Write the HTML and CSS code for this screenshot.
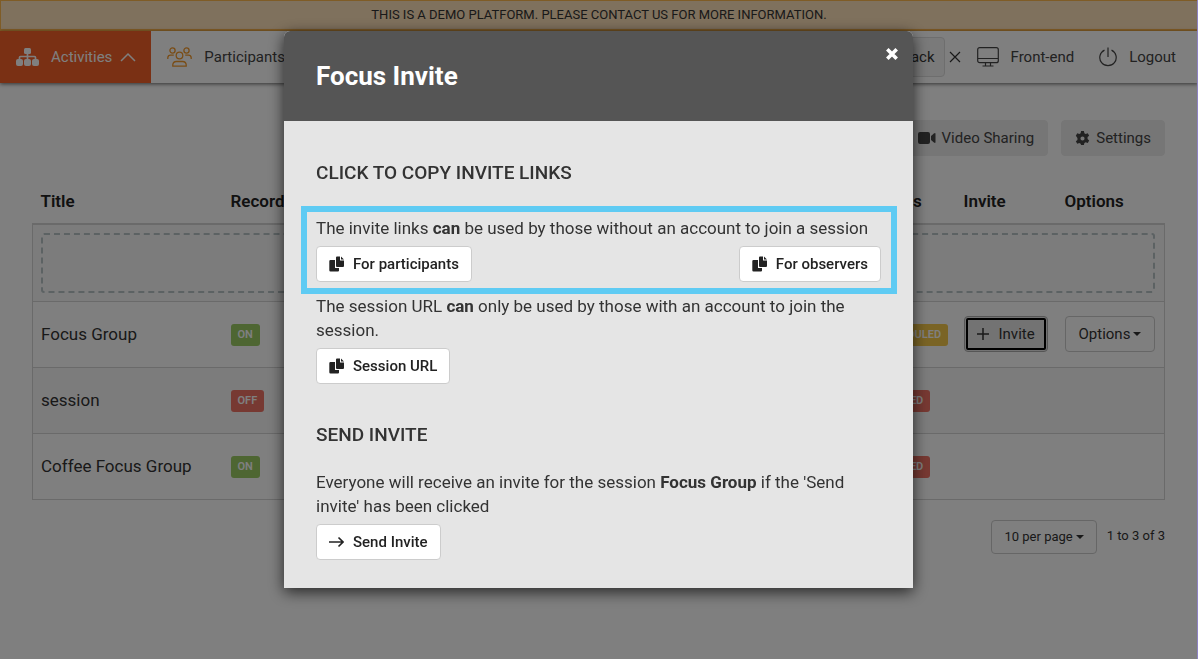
FILE: index.html
```html
<!DOCTYPE html>
<html lang="en">
<head>
    <meta charset="UTF-8">
    <meta name="viewport" content="width=device-width, initial-scale=1.0">
    <title>Focus Invite</title>
    <link rel="stylesheet" href="styles.css">
</head>
<body>
    <div class="banner">THIS IS A DEMO PLATFORM. PLEASE CONTACT US FOR MORE INFORMATION.</div>

    <nav class="navbar">
        <a href="#" class="nav-link active">
            <svg class="icon-nav" width="23" height="18" viewBox="0 0 23 18" fill="currentColor">
                <rect x="8" y="0" width="7" height="6" rx="1.5"/>
                <rect x="0" y="11" width="7" height="7" rx="2"/>
                <rect x="8" y="11" width="7" height="7" rx="2"/>
                <rect x="16" y="11" width="7" height="7" rx="2"/>
                <path d="M11.5 5v7M3.5 12V9.500a1 1 0 0 1 1-1h14a1 1 0 0 1 1 1V12" fill="none" stroke="currentColor" stroke-width="1.700"/>
            </svg>
            <span>Activities</span>
            <svg width="16" height="10" viewBox="0 0 16 10" fill="none" stroke="currentColor" stroke-width="1.500"><path d="M1 9l7-7 7 7"/></svg>
        </a>
        <a href="#" class="nav-link">
            <svg class="icon-orange" width="25" height="20" viewBox="0 0 25 20" fill="none" stroke="currentColor" stroke-width="1.300">
                <circle cx="5.500" cy="3.500" r="2.600"/>
                <circle cx="19.500" cy="3.500" r="2.600"/>
                <circle cx="12.500" cy="8.500" r="3.300"/>
                <path d="M.8 12v-1.200a2.800 2.800 0 0 1 2.800-2.600h3.200M24.200 12v-1.200a2.800 2.800 0 0 0-2.800-2.600h-3.200"/>
                <path d="M5.800 19.200v-1.400a3.600 3.600 0 0 1 3.600-3.300h6.200a3.600 3.600 0 0 1 3.600 3.300v1.400z"/>
            </svg>
            <span>Participants</span>
        </a>
        <div class="nav-right">
            <button class="feedback">Feedback</button>
            <button class="dismiss" aria-label="Close feedback">
                <svg width="12" height="12" viewBox="0 0 12 12" fill="none" stroke="currentColor" stroke-width="1.200"><path d="M1 1l10 10M11 1L1 11"/></svg>
            </button>
            <a href="#" class="right-link front-end">
                <svg width="22" height="20" viewBox="0 0 22 20" fill="none" stroke="currentColor" stroke-width="1.200">
                    <rect x=".7" y=".7" width="20.600" height="15" rx="2"/>
                    <path d="M1 11.500h20M8.500 16v2.500M13.500 16v2.500M5.500 19h11"/>
                </svg>
                <span>Front-end</span>
            </a>
            <a href="#" class="right-link">
                <svg width="18" height="20" viewBox="0 0 18 20" fill="none" stroke="currentColor" stroke-width="1.200"><path d="M9 .5v9.500M5.500 3.100a8.200 8.200 0 1 0 7 0"/></svg>
                <span>Logout</span>
            </a>
        </div>
    </nav>

    <main class="content">
        <div class="toolbar">
            <button class="btn btn-grey">
                <svg width="18" height="12" viewBox="0 0 18 12" fill="currentColor"><rect width="12" height="12" rx="2"/><path d="M13 4l3-2.600q1.500-.9 1.500.6v8q0 1.500-1.500.6L13 8z"/></svg>
                <span>Video Sharing</span>
            </button>
            <button class="btn btn-grey">
                <svg width="15" height="15" viewBox="0 0 16 16" fill="currentColor" fill-rule="evenodd"><path d="M6.500 0h3l.5 2.300 1.400.8 2.200-.8 1.500 2.700-1.700 1.500v2l1.700 1.500-1.500 2.700-2.200-.8-1.400.8-.5 2.300h-3L6 13.700l-1.400-.8-2.200.8L.9 11l1.700-1.500v-2L.9 5l1.500-2.700 2.200.8L6 2.300zM8 5.800a2.200 2.200 0 1 0 0 4.400 2.200 2.200 0 0 0 0-4.400z"/></svg>
                <span>Settings</span>
            </button>
        </div>

        <table class="sessions">
            <thead>
                <tr>
                    <th class="col-title">Title</th>
                    <th>Recording</th>
                    <th class="col-status">Status</th>
                    <th class="col-invite">Invite</th>
                    <th class="col-options">Options</th>
                </tr>
            </thead>
            <tbody>
                <tr class="drop-row">
                    <td colspan="5"><div class="drop-zone"></div></td>
                </tr>
                <tr>
                    <td>Focus Group</td>
                    <td><span class="label green">ON</span></td>
                    <td><span class="label yellow">SCHEDULED</span></td>
                    <td>
                        <button class="btn btn-outline btn-focus">
                            <svg width="12" height="12" viewBox="0 0 12 12" fill="none" stroke="currentColor" stroke-width="1.500"><path d="M6 0v12M0 6h12"/></svg>
                            <span>Invite</span>
                        </button>
                    </td>
                    <td><button class="btn btn-outline dropdown">Options<i class="caret"></i></button></td>
                </tr>
                <tr class="shaded">
                    <td>session</td>
                    <td><span class="label red">OFF</span></td>
                    <td><span class="label red">EXPIRED</span></td>
                    <td></td>
                    <td></td>
                </tr>
                <tr>
                    <td>Coffee Focus Group</td>
                    <td><span class="label green">ON</span></td>
                    <td><span class="label red">EXPIRED</span></td>
                    <td></td>
                    <td></td>
                </tr>
            </tbody>
        </table>

        <div class="pager">
            <button class="btn btn-outline dropdown">10 per page<i class="caret"></i></button>
            <span>1 to 3 of 3</span>
        </div>
    </main>

    <!-- Invite dialog -->
    <div class="backdrop">
        <div class="modal" role="dialog" aria-labelledby="modalTitle">
            <div class="modal-header">
                <h1 id="modalTitle">Focus Invite</h1>
                <button class="close" aria-label="Close">
                    <svg width="12" height="12" viewBox="0 0 12 12" fill="none" stroke="currentColor" stroke-width="3.600"><path d="M1.300 1.300l9.400 9.400M10.700 1.300l-9.400 9.400"/></svg>
                </button>
            </div>
            <div class="modal-body">
                <h2>CLICK TO COPY INVITE LINKS</h2>
                <div class="highlight">
                    <p>The invite links <b>can</b> be used by those without an account to join a session</p>
                    <div class="button-row">
                        <button class="btn btn-white">
                            <svg width="15" height="16" viewBox="0 0 15 16" fill="currentColor"><path d="M1.500 4H6v8h4v2.500a1 1 0 0 1-1 1H1.500a1.200 1.200 0 0 1-1.200-1.200V5.200A1.200 1.200 0 0 1 1.500 4z"/><path d="M8 .5h3v4h4v5.500a1 1 0 0 1-1 1H8a1 1 0 0 1-1-1v-8.500a1 1 0 0 1 1-1zM12 .5l3 3h-3z"/></svg>
                            <span>For participants</span>
                        </button>
                        <button class="btn btn-white">
                            <svg width="15" height="16" viewBox="0 0 15 16" fill="currentColor"><path d="M1.500 4H6v8h4v2.500a1 1 0 0 1-1 1H1.500a1.200 1.200 0 0 1-1.200-1.200V5.200A1.200 1.200 0 0 1 1.500 4z"/><path d="M8 .5h3v4h4v5.500a1 1 0 0 1-1 1H8a1 1 0 0 1-1-1v-8.500a1 1 0 0 1 1-1zM12 .5l3 3h-3z"/></svg>
                            <span>For observers</span>
                        </button>
                    </div>
                </div>
                <p>The session URL <b>can</b> only be used by those with an account to join the session.</p>
                <button class="btn btn-white">
                    <svg width="15" height="16" viewBox="0 0 15 16" fill="currentColor"><path d="M1.500 4H6v8h4v2.500a1 1 0 0 1-1 1H1.500a1.200 1.200 0 0 1-1.200-1.200V5.200A1.200 1.200 0 0 1 1.500 4z"/><path d="M8 .5h3v4h4v5.500a1 1 0 0 1-1 1H8a1 1 0 0 1-1-1v-8.500a1 1 0 0 1 1-1zM12 .5l3 3h-3z"/></svg>
                    <span>Session URL</span>
                </button>

                <h2 class="send-title">SEND INVITE</h2>
                <p>Everyone will receive an invite for the session <b>Focus Group</b> if the 'Send invite' has been clicked</p>
                <button class="btn btn-white">
                    <svg width="15" height="12" viewBox="0 0 15 12" fill="none" stroke="currentColor" stroke-width="1.600"><path d="M0 6h14M9.500 1.500L14 6l-4.500 4.500"/></svg>
                    <span>Send Invite</span>
                </button>
            </div>
        </div>
    </div>
</body>
</html>
```
FILE: styles.css
```css
* {
    box-sizing: border-box;
}
body {
    margin: 0;
    font-family: Roboto, sans-serif;
    font-size: 17px;
    line-height: 24px;
    color: #333;
    background-color: #fff;
}
button {
    font-family: inherit;
    color: inherit;
    cursor: pointer;
}
svg {
    flex: none;
}
.banner {
    height: 31px;
    border: 1px solid #ffb84d;
    border-bottom-width: 2px;
    background-color: #ffe2ba;
    font-size: 13px;
    line-height: 28px;
    text-align: center;
}
.navbar {
    display: flex;
    height: 52px;
    background-color: #fff;
    box-shadow: 0 1px 4px rgba(0, 0, 0, 0.6);
    font-size: 15px;
}
.nav-link {
    display: flex;
    align-items: center;
    gap: 12px;
    padding: 0 15px;
    color: #444;
    text-decoration: none;
}
.nav-link.active {
    gap: 8px;
    margin-right: 1px;
    padding-left: 16px;
    background-color: #f46028;
    color: #fff;
}
.icon-nav {
    margin-right: 4px;
}
.icon-orange {
    color: #f39a2d;
}
.nav-right {
    display: flex;
    align-items: center;
    margin-left: auto;
    padding-right: 22px;
}
.feedback {
    height: 40px;
    padding: 0 9px;
    border: 1px solid #ddd;
    border-radius: 4px;
    background-color: #f4f4f4;
    font-size: 15px;
}
.dismiss {
    display: flex;
    padding: 0 4px;
    border: none;
    background: none;
}
.right-link {
    display: flex;
    align-items: center;
    gap: 12px;
    color: #444;
    text-decoration: none;
}
.front-end {
    margin: 0 25px 0 12px;
}
.content {
    padding: 37px 33px 0 32px;
}
.toolbar {
    display: flex;
    justify-content: flex-end;
    gap: 13px;
}
.btn {
    display: inline-flex;
    align-items: center;
    height: 36px;
    padding: 0 12px;
    border: 1px solid #ccc;
    border-radius: 4px;
    background-color: #fff;
    font-size: 15px;
    white-space: nowrap;
}
.btn-grey {
    gap: 6px;
    padding: 0 13px;
    border-color: #ececec;
    background-color: #ececec;
    color: #444;
}
.sessions {
    width: 100%;
    margin-top: 23px;
    border-collapse: collapse;
    table-layout: fixed;
}
.sessions th {
    height: 45px;
    padding: 0 9px 0 8px;
    font-weight: 600;
    text-align: left;
    color: #222;
}
.sessions tbody {
    border: 1px solid #d4d4d4;
    border-top-width: 2px;
}
.sessions td {
    height: 66px;
    padding: 0 9px 0 8px;
    border-top: 1px solid #d4d4d4;
}
.sessions .drop-row td {
    height: 77px;
    border-top: 2px solid #d4d4d4;
}
.drop-row,
.shaded {
    background-color: #f9f9f9;
}
.drop-zone {
    height: 60px;
    border: 2px dashed #b8c4c7;
    border-radius: 3px;
}
.col-title {
    width: 190px;
}
.col-status {
    width: 91px;
}
.col-invite {
    width: 101px;
}
.col-options {
    width: 108px;
}
.label {
    display: inline-block;
    padding: 0 7px;
    border-radius: 3px;
    font-size: 11px;
    font-weight: 600;
    line-height: 22px;
    vertical-align: middle;
    color: #fff;
}
.green {
    background-color: #9ccc65;
}
.red {
    background-color: #ee7265;
}
.yellow {
    background-color: #f4c84a;
}
.btn-outline {
    background-color: #fff;
}
.btn-focus {
    gap: 10px;
    border-color: #adadad;
    background-color: #e6e6e6;
    outline: 2px solid #000;
    outline-offset: -4px;
}
.dropdown {
    gap: 3px;
    padding: 0 13px;
}
.caret {
    border: 4px solid transparent;
    border-top-color: currentColor;
    border-bottom: 0;
}
.pager {
    display: flex;
    justify-content: flex-end;
    gap: 10px;
    margin-top: 20px;
    font-size: 13px;
    line-height: 32px;
}
.pager .btn {
    height: 34px;
    padding: 0 12px;
    font-size: 13px;
}
.backdrop {
    position: fixed;
    inset: 0;
    padding: 31px 16px;
    border-right: 1px solid #8d82c4;
    background-color: rgba(0, 0, 0, 0.5);
}
.modal {
    max-width: 629px;
    margin: 0 auto;
    border-radius: 6px 6px 0 0;
    background-color: #e5e5e5;
    box-shadow: 0 4px 15px rgba(0, 0, 0, 0.7);
}
.modal-header {
    display: flex;
    justify-content: space-between;
    align-items: flex-start;
    padding: 17px 15px 31px 32px;
    border-radius: 6px 6px 0 0;
    background-color: #555;
    color: #fff;
}
.modal-header h1 {
    margin: 14px 0 0;
    font-size: 26px;
    font-weight: 700;
    line-height: 28px;
}
.close {
    display: flex;
    padding: 0;
    border: none;
    background: none;
}
.modal-body {
    padding: 40px 32px 28px;
}
.modal-body h2 {
    margin: 0 0 21px;
    font-size: 19px;
    font-weight: 500;
}
.modal-body p {
    margin: 0 0 6px;
}
.highlight {
    margin: 0 -16px 0 -15px;
    padding: 4px 10px 6px 9px;
    border: 6px solid #5fcbf3;
}
.button-row {
    display: flex;
    justify-content: space-between;
}
.btn-white {
    gap: 9px;
    color: #222;
    font-weight: 500;
}
.modal-body .send-title {
    margin: 39px 0 23px;
}
```
